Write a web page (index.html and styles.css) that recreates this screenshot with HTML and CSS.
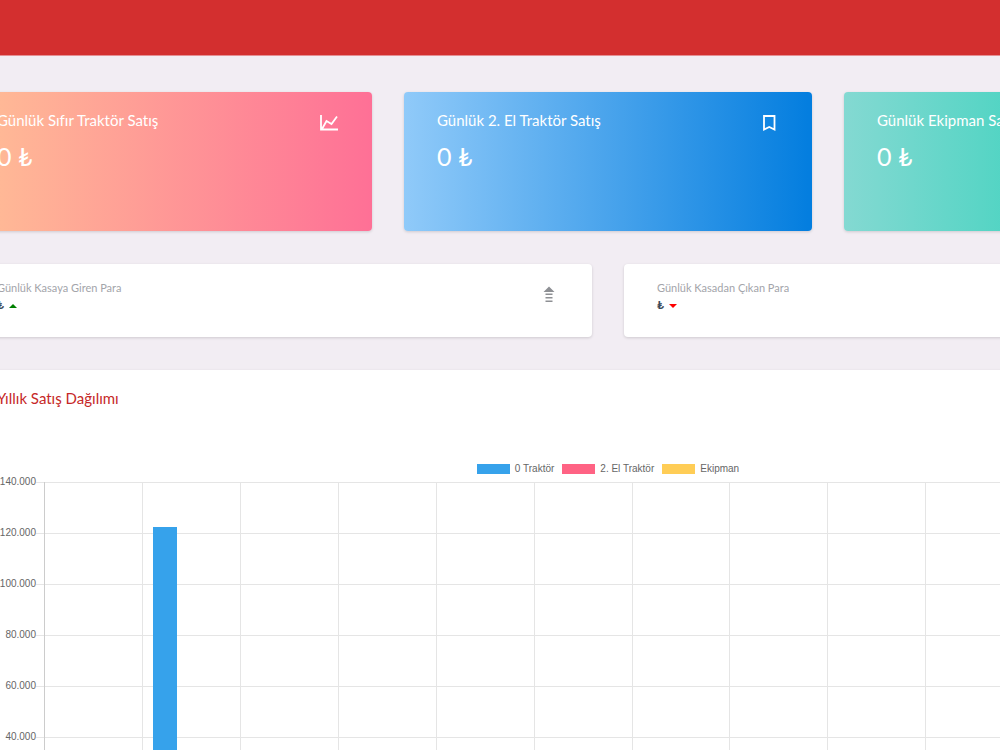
FILE: index.html
```html
<!DOCTYPE html>
<html lang="tr">

<head>
  <meta charset="UTF-8" />
  <meta name="viewport" content="width=device-width, initial-scale=1.0" />
  <title>Günlük Satış</title>
  <link rel="stylesheet" href="styles.css">
</head>

<body>
  <header class="topbar"></header>

  <main class="dashboard">
    <!-- Daily sales -->
    <section class="row">
      <div class="card sale sale-pink">
        <div>
          <h4>Günlük Sıfır Traktör Satış</h4>
          <p class="amount">0 ₺</p>
        </div>
        <svg class="icon" viewBox="0 0 20 20" fill="none" stroke="currentColor" stroke-width="1.800">
          <path d="M2 2v14.500h17M3 16L7.500 8l5 3L18 3.500" />
        </svg>
      </div>
      <div class="card sale sale-blue">
        <div>
          <h4>Günlük 2. El Traktör Satış</h4>
          <p class="amount">0 ₺</p>
        </div>
        <svg class="icon" viewBox="0 0 20 20" fill="none" stroke="currentColor" stroke-width="1.800">
          <path d="M5 3h10.500v13.500l-5.250-2.500-5.250 2.500z" />
        </svg>
      </div>
      <div class="card sale sale-green">
        <div>
          <h4>Günlük Ekipman Satış</h4>
          <p class="amount">0 ₺</p>
        </div>
      </div>
    </section>

    <!-- Cash in / out -->
    <section class="row">
      <div class="card cash">
        <div>
          <p class="cash-label">Günlük Kasaya Giren Para</p>
          <p class="cash-value">₺ <span class="caret up"></span></p>
        </div>
        <svg class="icon icon-gray" viewBox="0 0 20 20" fill="currentColor">
          <path d="M10 1.500l5.500 5.500h-11zM6.500 8.500h7v1.500h-7zM6.500 12h7v1.500h-7zM6.500 15.500h7v1.500h-7z" />
        </svg>
      </div>
      <div class="card cash">
        <div>
          <p class="cash-label">Günlük Kasadan Çıkan Para</p>
          <p class="cash-value">₺ <span class="caret down"></span></p>
        </div>
      </div>
    </section>

    <!-- Yearly chart -->
    <section class="card panel">
      <h3>Yıllık Satış Dağılımı</h3>
      <ul class="legend">
        <li><span class="swatch blue"></span>0 Traktör</li>
        <li><span class="swatch pink"></span>2. El Traktör</li>
        <li><span class="swatch yellow"></span>Ekipman</li>
      </ul>
      <div class="chart">
        <div class="axis">
          <span>140.000</span>
          <span>120.000</span>
          <span>100.000</span>
          <span>80.000</span>
          <span>60.000</span>
          <span>40.000</span>
          <span>20.000</span>
        </div>
        <div class="plot">
          <div class="month"></div>
          <div class="month"><span class="bar blue" style="height: 87.4%"></span></div>
          <div class="month"></div>
          <div class="month"></div>
          <div class="month"></div>
          <div class="month"></div>
          <div class="month"></div>
          <div class="month"></div>
          <div class="month"></div>
          <div class="month"></div>
          <div class="month"></div>
          <div class="month"></div>
        </div>
      </div>
    </section>
  </main>
</body>

</html>
```

FILE: styles.css
```css
* {
  box-sizing: border-box;
}

body {
  font-family: Lato, "DejaVu Sans", sans-serif;
  font-variant-ligatures: none;
  background-color: #f2edf3;
  margin: 0;
  height: 100vh;
  overflow: hidden;
}

h3,
h4,
p {
  margin: 0;
  font-weight: normal;
}

.topbar {
  height: 55px;
  background-color: #d32f2f;
  border-bottom: 1px solid #e58f93;
  box-sizing: content-box;
}

/* the board is wider than the window and runs off both sides */
.dashboard {
  display: flex;
  flex-direction: column;
  gap: 33px;
  margin: 36px -252px 0 -36px;
}

.row {
  display: flex;
  gap: 32px;
}

.card {
  flex: 1;
  border-radius: 4px;
  background-color: #fff;
  box-shadow: 0 1px 3px rgba(0, 0, 0, 0.15);
}

.sale,
.cash {
  display: flex;
  justify-content: space-between;
  padding: 16px 33px;
}

.sale {
  min-height: 139px;
  color: #fff;
}

.sale-pink {
  background: linear-gradient(to right, #ffbf96, #fe7096);
}

.sale-blue {
  background: linear-gradient(to right, #90caf9, #047edf 99%);
}

.sale-green {
  background: linear-gradient(to right, #84d9d2, #07cdae);
}

.sale h4 {
  font-size: 15px;
  line-height: 24px;
}

.amount {
  margin-top: 8px;
  font-size: 25px;
  line-height: 32px;
}

.icon {
  width: 20px;
  height: 20px;
  margin-top: 5px;
}

.cash {
  min-height: 73px;
}

.cash-label {
  font-size: 11px;
  line-height: 16px;
  color: #a3a5aa;
}

.cash-value {
  font-size: 12px;
  line-height: 18px;
  font-weight: bold;
  color: #3e4b5b;
}

.icon-gray {
  color: #8e9094;
}

.caret {
  display: inline-block;
  margin-left: 2px;
  border: 4px solid transparent;
  vertical-align: middle;
}

.up {
  border-top: 0;
  border-bottom-color: green;
}

.down {
  border-bottom: 0;
  border-top-color: red;
}

.panel {
  padding: 16px 33px 33px;
}

.panel h3 {
  font-size: 15px;
  line-height: 24px;
  color: #c62828;
}

.legend,
.axis {
  font-family: "Liberation Sans", Arial, sans-serif;
  font-size: 10px;
  color: #666;
}

.legend {
  display: flex;
  justify-content: center;
  gap: 8px;
  margin: 53px 0 7px;
  padding: 0;
  list-style: none;
  line-height: 12px;
}

.legend li {
  display: flex;
  align-items: center;
  gap: 5px;
}

.swatch {
  width: 33px;
  height: 10px;
}

.blue {
  background-color: #36a2eb;
}

.pink {
  background-color: #ff6384;
}

.yellow {
  background-color: #ffcd56;
}

.chart {
  display: flex;
}

.axis {
  width: 39px;
  line-height: 10px;
  text-align: right;
}

.axis span {
  display: block;
  height: 51px;
  margin-top: -5px;
  margin-bottom: 5px;
  margin-left: -8px;
}

.plot {
  display: flex;
  flex: 1;
  height: 358px;
  padding-left: 8px;
  background: repeating-linear-gradient(#e5e5e5 0 1px, transparent 1px 51px);
}

.month {
  display: flex;
  flex: 1;
  align-items: flex-end;
  padding-left: 10px;
  border-left: 1px solid #e5e5e5;
}

.month:first-child {
  border-left-color: #ccc;
}

.bar {
  width: 28%;
}
```
